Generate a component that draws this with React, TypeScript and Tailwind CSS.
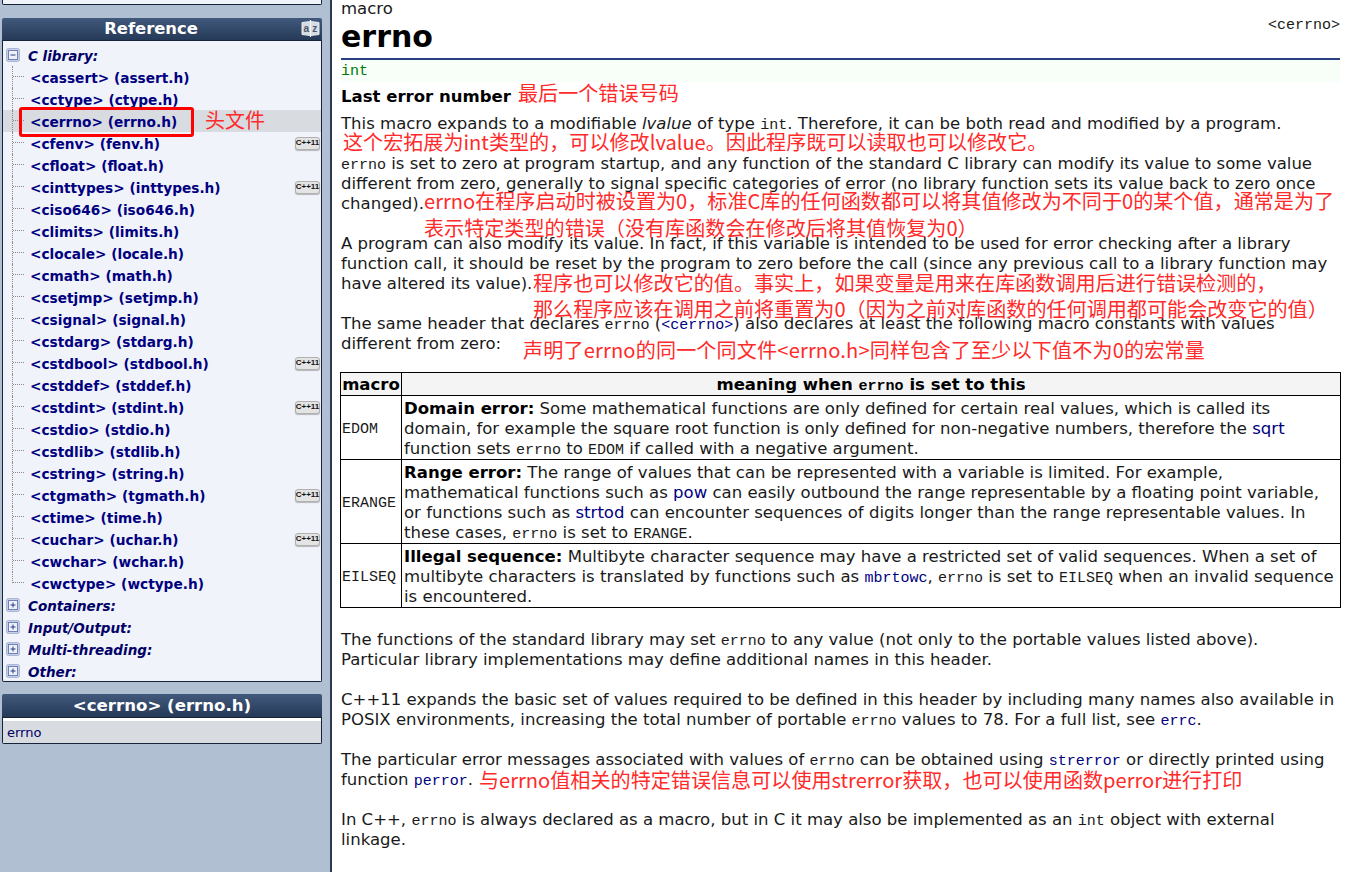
const sans = { fontFamily: '"DejaVu Sans", sans-serif' };

const headers: [string, boolean][] = [
  ["<cassert> (assert.h)", false],
  ["<cctype> (ctype.h)", false],
  ["<cerrno> (errno.h)", false],
  ["<cfenv> (fenv.h)", true],
  ["<cfloat> (float.h)", false],
  ["<cinttypes> (inttypes.h)", true],
  ["<ciso646> (iso646.h)", false],
  ["<climits> (limits.h)", false],
  ["<clocale> (locale.h)", false],
  ["<cmath> (math.h)", false],
  ["<csetjmp> (setjmp.h)", false],
  ["<csignal> (signal.h)", false],
  ["<cstdarg> (stdarg.h)", false],
  ["<cstdbool> (stdbool.h)", true],
  ["<cstddef> (stddef.h)", false],
  ["<cstdint> (stdint.h)", true],
  ["<cstdio> (stdio.h)", false],
  ["<cstdlib> (stdlib.h)", false],
  ["<cstring> (string.h)", false],
  ["<ctgmath> (tgmath.h)", true],
  ["<ctime> (time.h)", false],
  ["<cuchar> (uchar.h)", true],
  ["<cwchar> (wchar.h)", false],
  ["<cwctype> (wctype.h)", false],
];

function Toggle({ open }: { open?: boolean }) {
  return (
    <svg width="14" height="14" viewBox="0 0 14 14" className="shrink-0">
      <rect x="0.5" y="0.5" width="13" height="13" rx="2" fill="#c4cfe6" stroke="#a9b6d6" />
      <rect x="2.5" y="2.5" width="9" height="9" fill="#eef1fa" stroke="#6f80b5" />
      <path d={open ? "M4.5 7h5" : "M4.5 7h5M7 4.5v5"} stroke="#2b3f80" strokeWidth="1" />
    </svg>
  );
}

function Group({ label }: { label: string }) {
  return (
    <div className="flex h-[22px] items-center pl-[3px]">
      <Toggle />
      <span className="ml-[8px] pt-[2px] text-[13.5px] font-bold italic text-[#000066]">{label}</span>
    </div>
  );
}

function CppBadge() {
  return (
    <span className="flex h-[13px] w-[25px] items-center justify-center rounded-[3px] border border-[#b0b0b0] bg-[#e4e4e4] font-['Liberation_Sans',sans-serif] text-[8px] leading-none font-bold text-[#111] shadow-[0_1px_1px_rgba(0,0,0,0.25)]">
      C++11
    </span>
  );
}

function HeaderRow({ text, cpp, last }: { text: string; cpp: boolean; last: boolean }) {
  const active = text.startsWith("<cerrno>");
  return (
    <div className={`flex h-[22px] items-center pr-[1px] ${active ? "bg-[#d8dbe0]" : ""}`}>
      <span className={`ml-[9px] w-[14px] shrink-0 border-l border-dotted border-[#8a8a8a] ${last ? "h-[11px] self-start" : "h-[22px]"}`}>
        <span className="mt-[10px] block w-[11px] border-t border-dotted border-[#8a8a8a]" />
      </span>
      <span className="ml-[4px] flex-1 pt-[2px] text-[13.7px] font-bold whitespace-nowrap text-[#000080]">{text}</span>
      {cpp && <CppBadge />}
    </div>
  );
}

function BookIcon() {
  return (
    <svg width="19" height="19" viewBox="0 0 19 19" className="absolute top-[1px] right-[2px]">
      <path d="M1 3.5 9.5 2.5 18 3.5V15.5L9.5 16.5 1 15.5Z" fill="#d5dbe3" stroke="#e9edf2" />
      <path d="M9.5 1v17" stroke="#f4f6f9" strokeWidth="1.2" />
      <text x="5.2" y="13" textAnchor="middle" fontSize="10" fontWeight="700" fill="#4a5566" fontFamily="Liberation Sans">a</text>
      <text x="13.8" y="13" textAnchor="middle" fontSize="10" fontWeight="700" fill="#4a5566" fontFamily="Liberation Sans">z</text>
    </svg>
  );
}

function Sidebar() {
  return (
    <aside className="flex w-[332px] shrink-0 flex-col border-r-2 border-[#2c3a4f] bg-[#b0c0d2] pr-[8px] pl-[2px]">
      <div className="h-[5px] rounded-b-[2px] border-x border-b border-[#16243a] bg-[#f0f3f9]" />
      <div className="relative mt-[13px] flex h-[23px] items-center justify-center rounded-t-[2px] border-b border-[#16243a] bg-gradient-to-b from-[#41597c] to-[#263a58] pt-[1px] pr-[22px] text-[16.4px] font-bold text-white">
        Reference
        <BookIcon />
      </div>
      <div className="h-[641px] rounded-b-[2px] border-x border-b border-[#16243a] bg-[#f0f3f9] pt-[3px]">
        <div className="flex h-[22px] items-center pl-[3px]">
          <Toggle open />
          <span className="ml-[8px] pt-[2px] text-[13.5px] font-bold italic text-[#000066]">C library:</span>
        </div>
        {headers.map(([text, cpp], i) => (
          <HeaderRow key={text} text={text} cpp={cpp} last={i === headers.length - 1} />
        ))}
        <Group label="Containers:" />
        <Group label="Input/Output:" />
        <Group label="Multi-threading:" />
        <Group label="Other:" />
      </div>
      <div className="mt-[12px] flex h-[24px] items-center justify-center rounded-t-[2px] border-b border-[#16243a] bg-gradient-to-b from-[#41597c] to-[#263a58] pt-[2px] text-[16.6px] font-bold text-white">
        {"<cerrno> (errno.h)"}
      </div>
      <div className="h-[26px] rounded-b-[2px] border-x border-b border-[#16243a] bg-white pt-[3px]">
        <div className="h-[22px] bg-[#d8dbe0] pt-[1px] pl-[4px] text-[13px] leading-[22px] text-[#000066]">errno</div>
      </div>
    </aside>
  );
}

function C({ children, link }: { children: string; link?: boolean }) {
  return (
    <code className={`font-['Liberation_Mono',monospace] text-[15px] leading-none ${link ? "text-[#000080]" : ""}`}>{children}</code>
  );
}

function Link({ children }: { children: string }) {
  return <span className="text-[#000080]">{children}</span>;
}

function Note({ className, children }: { className: string; children: string }) {
  return (
    <span
      className={`absolute font-['Noto_Sans_CJK_SC',sans-serif] text-[20.1px] leading-[26px] whitespace-nowrap text-[#ff2a2a] ${className}`}
    >
      {children}
    </span>
  );
}

function Main() {
  return (
    <main className="relative min-w-0 flex-1 pr-[25px] pl-[9px] text-[16.55px] leading-[20px] text-[#1a1a1a]">
      <div className="h-[19px] leading-[18px]">macro</div>
      <div className="relative h-[41px] border-b-2 border-[#2a4080]">
        <h1 className="text-[30px] leading-[36px] font-bold text-black">errno</h1>
        <span className="absolute top-0 right-0 font-['Liberation_Mono',monospace] text-[15px] leading-[14px]">{"<cerrno>"}</span>
      </div>
      <div className="h-[22px] bg-[#f8fff8] pt-[2px] font-['Liberation_Mono',monospace] text-[15px] leading-[20px] text-[#007700]">int</div>
      <p className="mt-[5px] font-bold text-black">Last error number</p>
      <p className="mt-[7px]">
        This macro expands to a modifiable <em>lvalue</em> of type <C>int</C>. Therefore, it can be both read and modified by a program.
      </p>
      <p className="mt-[20px]">
        <C>errno</C> is set to zero at program startup, and any function of the standard C library can modify its value to some value
        <br />
        different from zero, generally to signal specific categories of error (no library function sets its value back to zero once
        <br />
        changed).
      </p>
      <p className="mt-[20px]">
        A program can also modify its value. In fact, if this variable is intended to be used for error checking after a library
        <br />
        function call, it should be reset by the program to zero before the call (since any previous call to a library function may
        <br />
        have altered its value).
      </p>
      <p className="mt-[20px]">
        The same header that declares <C>errno</C> (<C link>{"<cerrno>"}</C>) also declares at least the following macro constants with values
        <br />
        different from zero:
      </p>
      <table className="mt-[18px] -ml-[1px] w-[1001px] border-collapse border border-black text-left">
        <thead>
          <tr className="h-[23px] bg-[#f4f4f4] text-center font-bold text-black">
            <th className="w-[61px] border border-black px-[1px] pt-[1px] font-bold">macro</th>
            <th className="border border-black px-[1px] pt-[1px] font-bold">
              meaning when <C>errno</C> is set to this
            </th>
          </tr>
        </thead>
        <tbody>
          <tr>
            <td className="border border-black px-[1px] align-middle"><C>EDOM</C></td>
            <td className="border border-black px-[2px] pt-[3px]">
              <b className="text-black">Domain error:</b> Some mathematical functions are only defined for certain real values, which is called its
              <br />
              domain, for example the square root function is only defined for non-negative numbers, therefore the <Link>sqrt</Link>
              <br />
              function sets <C>errno</C> to <C>EDOM</C> if called with a negative argument.
            </td>
          </tr>
          <tr>
            <td className="border border-black px-[1px] align-middle"><C>ERANGE</C></td>
            <td className="border border-black px-[2px] pt-[3px]">
              <b className="text-black">Range error:</b> The range of values that can be represented with a variable is limited. For example,
              <br />
              mathematical functions such as <Link>pow</Link> can easily outbound the range representable by a floating point variable,
              <br />
              or functions such as <Link>strtod</Link> can encounter sequences of digits longer than the range representable values. In
              <br />
              these cases, <C>errno</C> is set to <C>ERANGE</C>.
            </td>
          </tr>
          <tr>
            <td className="border border-black px-[1px] align-middle"><C>EILSEQ</C></td>
            <td className="border border-black px-[2px] pt-[3px]">
              <b className="text-black">Illegal sequence:</b> Multibyte character sequence may have a restricted set of valid sequences. When a set of
              <br />
              multibyte characters is translated by functions such as <C link>mbrtowc</C>, <C>errno</C> is set to <C>EILSEQ</C> when an invalid sequence
              <br />
              is encountered.
            </td>
          </tr>
        </tbody>
      </table>
      <p className="mt-[22px]">
        The functions of the standard library may set <C>errno</C> to any value (not only to the portable values listed above).
        <br />
        Particular library implementations may define additional names in this header.
      </p>
      <p className="mt-[20px]">
        C++11 expands the basic set of values required to be defined in this header by including many names also available in
        <br />
        POSIX environments, increasing the total number of portable <C>errno</C> values to 78. For a full list, see <C link>errc</C>.
      </p>
      <p className="mt-[20px]">
        The particular error messages associated with values of <C>errno</C> can be obtained using <C link>strerror</C> or directly printed using
        <br />
        function <C link>perror</C>.
      </p>
      <p className="mt-[20px]">
        In C++, <C>errno</C> is always declared as a macro, but in C it may also be implemented as an <C>int</C> object with external
        <br />
        linkage.
      </p>

      <Note className="top-[80px] left-[186px]">最后一个错误号码</Note>
      <Note className="top-[129px] left-[11px]">这个宏拓展为int类型的，可以修改lvalue。因此程序既可以读取也可以修改它。</Note>
      <Note className="top-[188px] left-[92px]">errno在程序启动时被设置为0，标准C库的任何函数都可以将其值修改为不同于0的某个值，通常是为了</Note>
      <Note className="top-[215px] left-[92px]">表示特定类型的错误（没有库函数会在修改后将其值恢复为0）</Note>
      <Note className="top-[270px] left-[201px]">程序也可以修改它的值。事实上，如果变量是用来在库函数调用后进行错误检测的，</Note>
      <Note className="top-[296px] left-[201px]">那么程序应该在调用之前将重置为0（因为之前对库函数的任何调用都可能会改变它的值）</Note>
      <Note className="top-[337px] left-[191px] tracking-[0.15px]">声明了errno的同一个同文件&lt;errno.h&gt;同样包含了至少以下值不为0的宏常量</Note>
      <Note className="top-[767px] left-[147px]">与errno值相关的特定错误信息可以使用strerror获取，也可以使用函数perror进行打印</Note>
    </main>
  );
}

export default function App() {
  return (
    <div className="relative flex h-[872px] w-[1365px] overflow-hidden bg-white" style={sans}>
      <Sidebar />
      <Main />
      {/* red annotation drawn over the sidebar */}
      <div className="absolute top-[107px] left-[19px] h-[30px] w-[175px] rounded-[3px] border-[3px] border-[#ff0000]" />
      <span className="absolute top-[107px] left-[205px] font-['Noto_Sans_CJK_SC',sans-serif] text-[20px] leading-[26px] text-[#ff2a2a]">头文件</span>
    </div>
  );
}
